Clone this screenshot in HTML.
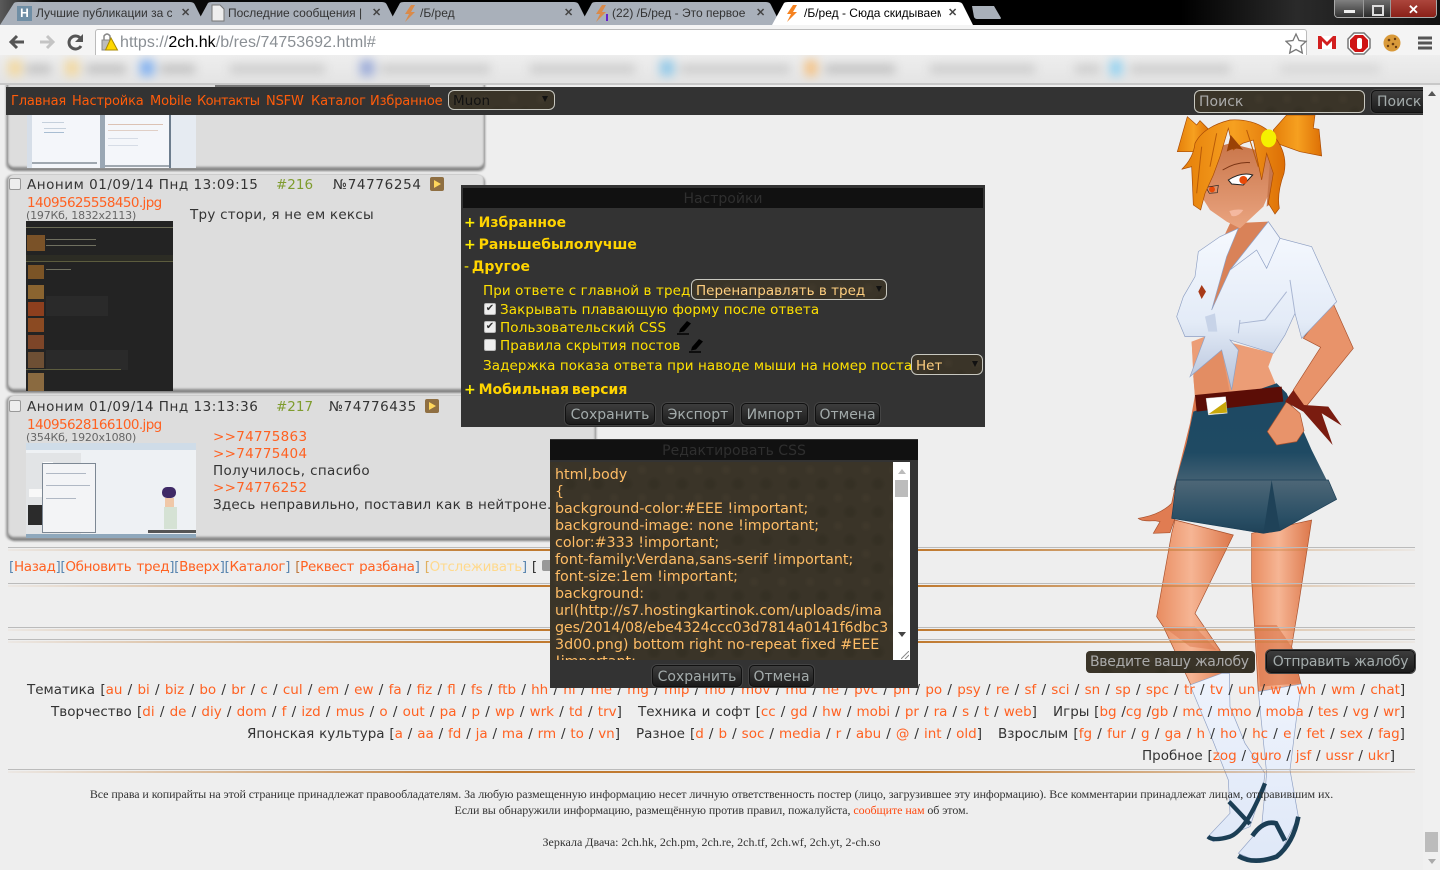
<!DOCTYPE html>
<html lang="ru"><head><meta charset="utf-8"><title>/Б/ред</title>
<style>
html,body{margin:0;padding:0;width:1440px;height:870px;overflow:hidden;background:#eee}
body{position:relative;font-family:"DejaVu Sans","Liberation Sans",sans-serif;font-size:13.5px;color:#333}
.a{position:absolute}
.t{position:absolute;white-space:nowrap;line-height:16px;height:16px;margin-top:1px}
.o{color:#ff6121}
.tab{position:absolute;font:12px/14px "Liberation Sans",sans-serif;color:#333;white-space:nowrap;overflow:hidden;top:6px}
.x{position:absolute;font:bold 11px/12px "Liberation Sans",sans-serif;color:#444;top:7px}
.post{position:absolute;background:#ddd;border-radius:6px;box-shadow:-2px 0 2px #999,1px 1px 2px #888,0 -3px 2px #888 inset}
.cb{position:absolute;width:10px;height:10px;border:1px solid #999;border-radius:2px;background:#eee}
.hr{position:absolute;left:8px;width:1407px;height:1px;background:#bbb}
.hr:after{content:"";position:absolute;left:0;right:0;top:2px;height:2px;background:linear-gradient(90deg,rgba(192,115,42,.05),#c07a30 35%,#c07a30 65%,rgba(192,115,42,.05))}
.btn{position:absolute;box-sizing:border-box;border:1px solid #111;border-radius:5px;background:linear-gradient(#3d3d3d,#1c1c1c);color:#a3abab;text-align:center;white-space:nowrap;box-shadow:0 0 0 1px #444}
.tex{background-color:#3a3428;background-image:radial-gradient(circle at 8px 8px,#3f382b 2px,transparent 6px),radial-gradient(circle at 20px 22px,#353024 3px,transparent 8px);background-size:28px 28px}
.sel{position:absolute;box-sizing:border-box;border:1px solid #c8c8c0;border-radius:6px;white-space:nowrap}
.arr{position:absolute;width:0;height:0;border-left:3px solid transparent;border-right:3px solid transparent;border-top:6px solid #111}
.y{color:#ffe100}
.h{position:absolute;white-space:nowrap;color:#ffd400;font-weight:bold;font-size:14px;line-height:16px;margin-top:1px;word-spacing:-2px}
.h b{color:#ffee00}
.box{position:absolute;white-space:nowrap;line-height:16px;text-align:justify;text-align-last:justify;margin-top:1px}
.ln{position:absolute;left:555px;white-space:nowrap;color:#ffbd66;font-size:14.3px;line-height:17px;margin-top:2px;letter-spacing:-.03px}
.f{position:absolute;left:8px;width:1407px;text-align:center;font:12px/16px "Liberation Serif",serif;color:#333;white-space:nowrap}
.m{position:absolute;top:94px;color:#ff5c0a;font-size:13px;line-height:16px;white-space:nowrap;letter-spacing:-.15px}
</style></head><body>

<!-- character background -->
<svg class="a" style="left:0;top:0" width="1440" height="870" viewBox="0 0 1440 870">
<defs>
<linearGradient id="sh" x1="0" y1="0" x2="0" y2="1"><stop offset="0" stop-color="#f7faff"/><stop offset=".6" stop-color="#e3ebf7"/><stop offset="1" stop-color="#b5c2da"/></linearGradient>
<linearGradient id="sk" x1="0" y1="0" x2="0" y2="1"><stop offset="0" stop-color="#1d4863"/><stop offset=".65" stop-color="#1f4a63"/><stop offset="1" stop-color="#4e6777"/></linearGradient>
<linearGradient id="sk2" x1="0" y1="0" x2="0" y2="1"><stop offset="0" stop-color="#4e6777"/><stop offset=".7" stop-color="#2a4f65"/><stop offset="1" stop-color="#1f4258"/></linearGradient>
<linearGradient id="leg" x1="0" y1="0" x2="1" y2="0"><stop offset="0" stop-color="#e88c60"/><stop offset=".45" stop-color="#f6b594"/><stop offset="1" stop-color="#dc774a"/></linearGradient>
<linearGradient id="hr" x1="0" y1="0" x2="1" y2="0"><stop offset="0" stop-color="#e57f0a"/><stop offset=".5" stop-color="#f6a020"/><stop offset="1" stop-color="#dd6f05"/></linearGradient>
<linearGradient id="fc" x1="0" y1="0" x2="0" y2="1"><stop offset="0" stop-color="#c9764a"/><stop offset="1" stop-color="#eaa480"/></linearGradient>
<linearGradient id="ft" x1="0" y1="0" x2="0" y2="1"><stop offset="0" stop-color="#eef3fc"/><stop offset="1" stop-color="#dfe8f8"/></linearGradient>
</defs>
<g transform="translate(1130,110) scale(.3333)">
<path d="M185,695 L195,855 L180,940 L130,1140 L165,1140 L205,900 L230,700Z" fill="#d9744a"/>
<path d="M605,570 L670,715 L520,900 L490,840 L572,712 L520,685Z" fill="#e8936a" stroke="#a8502c" stroke-width="2"/>
<path d="M300,340 L415,335 L400,390 L330,470 L300,480 L255,600 L235,600 L240,470Z" fill="#d98258"/>
<path d="M185,695 L225,680 L270,690 L430,730 L415,770 L440,830 L195,860 L190,800Z" fill="#ec9d76"/>
<path d="M225,680 L190,800 L195,860 L300,850 L275,720Z" fill="#e38d63"/>
<path d="M205,425 L270,380 L325,355 L290,440 L245,600 L300,480 L415,335 L450,385 L545,410 L620,575 L515,685 L495,610 L465,675 L430,730 L300,690 L325,720 L305,840 L275,720 L180,800 L225,680 L165,680 L140,620 L160,560 L195,500Z" fill="url(#sh)" stroke="#8fa0c4" stroke-width="2"/>
<path d="M450,385 L410,475 L380,420 L300,480 L415,335Z" fill="#eef3fb" stroke="#8fa0c4" stroke-width="2"/>
<path d="M480,510 L495,610 M330,640 L405,630 L470,545 M330,630 L325,670" fill="none" stroke="#a9b6d2" stroke-width="3"/>
<path d="M225,620 L255,610 L262,665 L235,665Z" fill="#c7d3e8"/>
<path d="M205,545 L215,525 L228,545 L215,567Z" fill="#a83a18"/>
<path d="M190,905 L440,820 L470,850 L545,1020 L605,1140 L130,1140 L170,1000Z" fill="url(#sk)"/>
<path d="M195,855 L455,830 L460,875 L200,905Z" fill="#5b0d06"/>
<path d="M228,865 L287,860 L292,910 L235,915Z" fill="#fff" stroke="#bbb"/>
<path d="M236,912 L288,875 L291,908Z" fill="#c9a80a"/>
<path d="M470,875 L510,910 L522,962 L500,995 L440,1005 L412,965Z" fill="#e8936a" stroke="#a8502c" stroke-width="2"/>
<path d="M465,875 L490,840 L522,885 L595,890 L635,947 L575,910 L608,1005 L520,905Z" fill="#7a1c10"/>
<path d="M195,170 L225,120 L300,100 L420,130 L430,220 L400,290 L330,355 L290,335 L240,300 L215,260Z" fill="url(#fc)"/>
<path d="M420,150 L460,170 L440,270 L410,290Z" fill="#c6764c"/>
<path d="M278,180 Q320,155 360,158" fill="none" stroke="#7a3414" stroke-width="3"/>
<path d="M295,210 Q335,185 368,195 L340,225 L305,222Z" fill="#fff" stroke="#222" stroke-width="3"/>
<circle cx="340" cy="210" r="12" fill="#e84a08"/><circle cx="246" cy="238" r="9" fill="#e84a08"/>
<path d="M228,232 L265,226 L262,248 L238,250Z" fill="none" stroke="#222" stroke-width="2"/>
<path d="M298,303 Q320,296 340,300 Q325,322 305,318Z" fill="#f4b8a0"/>
<path d="M142,125 L172,20 L200,45 L210,32 L240,62 L200,125Z" fill="url(#hr)" stroke="#a84a05" stroke-width="2"/>
<path d="M430,60 L470,15 L555,15 L550,55 L567,58 L575,138 L510,125 L440,100Z" fill="url(#hr)" stroke="#a84a05" stroke-width="2"/>
<path d="M155,178 Q190,145 195,100 Q220,50 300,30 Q380,25 430,75 Q475,130 462,190 Q440,250 448,295 L435,312 L415,280 L430,190 L410,130 L395,210 L370,90 L338,100 L310,120 L295,55 L270,140 L250,195 L225,250 L212,300 L190,285 L185,170Z" fill="url(#hr)" stroke="#a84a05" stroke-width="2"/>
<path d="M290,125 L302,75 L340,120 Q315,110 290,125Z" fill="#9a4206"/>
<path d="M215,110 L200,250 M260,70 L240,170 M350,60 L385,170" fill="none" stroke="#b85a08" stroke-width="3"/>
<ellipse cx="416" cy="85" rx="23" ry="27" fill="#f5f000"/>
</g>
<g transform="translate(1130,480) scale(.3333)">
<path d="M135,120 L310,165 L195,400 L270,510 L275,590 L185,620 L100,440 L80,410 L125,160Z" fill="url(#leg)" stroke="#a8502c" stroke-width="2"/>
<path d="M365,160 L545,120 L505,380 L485,500 L515,620 L385,640 L375,460 L365,300Z" fill="url(#leg)" stroke="#a8502c" stroke-width="2"/>
<path d="M100,440 L195,440 L260,510 L180,500Z" fill="#d9744a" opacity=".45"/>
<path d="M375,435 L440,435 L485,500 L510,610 L390,620Z" fill="#d9744a" opacity=".6"/>
<path d="M140,0 L125,70 Q90,105 25,115 Q35,125 75,122 L90,125 L70,160 L120,158 L135,115Z" fill="#e07c52" stroke="#a8502c" stroke-width="2"/>
<path d="M140,0 L125,115 L400,160 L450,152 L620,58 L595,0Z" fill="url(#sk2)" stroke="#1b3e55" stroke-width="2"/>
<path d="M425,0 L400,160 L450,152Z" fill="#1f4258"/>
<path d="M232,1072 L300,1000 L295,900 L240,760 L180,615 L275,580 L298,580 L300,680 L345,790 L405,880 L400,920 L360,1040 L250,1085Z" fill="url(#ft)" stroke="#8fa0c4" stroke-width="2"/>
<path d="M325,1120 L395,1040 L410,880 L385,635 L515,612 L500,710 L480,870 L505,1010 L450,1120 L390,1148Z" fill="url(#ft)" stroke="#8fa0c4" stroke-width="2"/>
<path d="M234,1070 Q250,1085 300,1070 Q350,1050 405,910" fill="none" stroke="#1b3e55" stroke-width="13"/>
<path d="M297,965 L360,1032" fill="none" stroke="#1b3e55" stroke-width="13"/>
<path d="M325,1128 Q370,1155 440,1130 Q490,1090 505,1010" fill="none" stroke="#1b3e55" stroke-width="14"/>
<path d="M367,1068 Q400,1020 438,1030 L465,1082" fill="none" stroke="#1b3e55" stroke-width="14"/>
</g>
</svg>

<!-- scrollbar -->
<div class="a" style="left:1423px;top:115px;width:17px;height:755px;background:#f0f0f0"></div>
<div class="a" style="left:1425px;top:832px;width:13px;height:20px;background:#bcbcbc;border:0"></div>
<div class="a" style="left:1428px;top:859px;width:0;height:0;border-left:4px solid transparent;border-right:4px solid transparent;border-top:5px solid #aaa"></div>

<!-- post 0 -->
<div class="post" style="left:8px;top:70px;width:476px;height:100px"></div>
<div class="a" style="left:27px;top:115px;width:169px;height:53px;background:#f4f6fa"></div>
<div class="a" style="left:27px;top:115px;width:5px;height:53px;background:#d6dee8"></div>
<div class="a" style="left:100px;top:115px;width:5px;height:53px;background:#9aa7b4"></div>
<div class="a" style="left:169px;top:115px;width:2px;height:53px;background:#6d7d8e"></div>
<div class="a" style="left:171px;top:115px;width:25px;height:53px;background:#e6ebf2"></div>
<div class="a" style="left:42px;top:122px;width:22px;height:1px;background:#c5d0dc"></div>
<div class="a" style="left:44px;top:128px;width:22px;height:1px;background:#c5d0dc"></div>
<div class="a" style="left:44px;top:132px;width:20px;height:1px;background:#a8bdd2"></div>
<div class="a" style="left:108px;top:124px;width:55px;height:1px;background:#dcc2b4"></div>
<div class="a" style="left:108px;top:130px;width:50px;height:1px;background:#e0cfc6"></div>
<div class="a" style="left:108px;top:138px;width:30px;height:1px;background:#d6dce6"></div>
<div class="a" style="left:108px;top:145px;width:30px;height:1px;background:#d6dce6"></div>
<div class="a" style="left:32px;top:162px;width:65px;height:2px;background:#a0a8b0"></div>
<div class="a" style="left:105px;top:165px;width:64px;height:2px;background:#a0a8b0"></div>

<!-- post 1 -->
<div class="post" style="left:8px;top:175px;width:476px;height:217px"></div>
<div class="cb" style="left:9px;top:178px"></div>
<div class="t" style="left:27px;top:176px;letter-spacing:.53px">Аноним 01/09/14 Пнд 13:09:15</div>
<div class="t" style="left:276px;top:176px;color:#7f9c2e">#216</div>
<div class="t" style="left:333px;top:176px;letter-spacing:.65px">№74776254</div>
<div class="a" style="left:430px;top:177px;width:14px;height:14px;background:#8f6f42;border-radius:2px"></div>
<div class="a" style="left:434px;top:180px;width:0;height:0;border-top:4px solid transparent;border-bottom:4px solid transparent;border-left:7px solid #ffd75c"></div>
<div class="t o" style="left:27px;top:194px;letter-spacing:-.6px">14095625558450.jpg</div>
<div class="t" style="left:26px;top:207px;font-size:11px;color:#666;letter-spacing:-.2px">(197Кб, 1832x2113)</div>
<div class="t" style="left:190px;top:206px;letter-spacing:.25px">Тру стори, я не ем кексы</div>
<div class="a" style="left:26px;top:221px;width:147px;height:170px;background:#232323;overflow:hidden">
<div class="a" style="left:0;top:6px;width:147px;height:1px;background:#6a6a55"></div>
<div class="a" style="left:0;top:34px;width:147px;height:7px;background:#2c2c24"></div>
<div class="a" style="left:0;top:40px;width:147px;height:1px;background:#5c5c3e"></div>
<div class="a" style="left:1px;top:14px;width:18px;height:16px;background:#7a5228"></div>
<div class="a" style="left:20px;top:18px;width:50px;height:1px;background:#707060"></div>
<div class="a" style="left:20px;top:24px;width:50px;height:1px;background:#707060"></div>
<div class="a" style="left:2px;top:44px;width:16px;height:14px;background:#7b5426"></div>
<div class="a" style="left:20px;top:48px;width:25px;height:1px;background:#707060"></div>
<div class="a" style="left:2px;top:64px;width:16px;height:14px;background:#8a6430"></div>
<div class="a" style="left:2px;top:81px;width:16px;height:14px;background:#8d3f1e"></div>
<div class="a" style="left:20px;top:75px;width:62px;height:20px;background:#2a2a2a"></div>
<div class="a" style="left:2px;top:97px;width:16px;height:14px;background:#8b4a22"></div>
<div class="a" style="left:2px;top:114px;width:16px;height:14px;background:#7d4528"></div>
<div class="a" style="left:2px;top:131px;width:16px;height:16px;background:#6d4f34"></div>
<div class="a" style="left:20px;top:129px;width:82px;height:20px;background:#2a2a2a"></div>
<div class="a" style="left:0;top:148px;width:95px;height:1px;background:#5c5c3e"></div>
<div class="a" style="left:2px;top:152px;width:16px;height:18px;background:#8a6a40"></div>
</div>

<!-- post 2 -->
<div class="post" style="left:8px;top:396px;width:587px;height:144px"></div>
<div class="cb" style="left:9px;top:400px"></div>
<div class="t" style="left:27px;top:398px;letter-spacing:.53px">Аноним 01/09/14 Пнд 13:13:36</div>
<div class="t" style="left:276px;top:398px;color:#7f9c2e">#217</div>
<div class="t" style="left:329px;top:398px;letter-spacing:.55px">№74776435</div>
<div class="a" style="left:425px;top:399px;width:14px;height:14px;background:#8f6f42;border-radius:2px"></div>
<div class="a" style="left:429px;top:402px;width:0;height:0;border-top:4px solid transparent;border-bottom:4px solid transparent;border-left:7px solid #ffd75c"></div>
<div class="t o" style="left:27px;top:416px;letter-spacing:-.6px">14095628166100.jpg</div>
<div class="t" style="left:26px;top:429px;font-size:11px;color:#666;letter-spacing:-.2px">(354Кб, 1920x1080)</div>
<div class="a" style="left:26px;top:443px;width:170px;height:95px;background:#eef1f4;overflow:hidden">
<div class="a" style="left:0;top:0;width:170px;height:7px;background:#cfdce8"></div>
<div class="a" style="left:0;top:10px;width:55px;height:85px;background:#e2e4e6"></div>
<div class="a" style="left:17px;top:19px;width:10px;height:8px;background:#fff"></div>
<div class="a" style="left:2px;top:62px;width:15px;height:20px;background:#2b2b2b"></div>
<div class="a" style="left:3px;top:46px;width:13px;height:8px;background:#f8f8f8"></div>
<div class="a" style="left:16px;top:20px;width:52px;height:68px;background:#f3f4f6;border:1px solid #7d8894"></div>
<div class="a" style="left:20px;top:30px;width:40px;height:1px;background:#b0b8c4"></div>
<div class="a" style="left:20px;top:42px;width:44px;height:1px;background:#b0b8c4"></div>
<div class="a" style="left:20px;top:55px;width:30px;height:1px;background:#b0b8c4"></div>
<div class="a" style="left:136px;top:44px;width:14px;height:11px;background:#3f2a66;border-radius:5px"></div>
<div class="a" style="left:139px;top:55px;width:9px;height:9px;background:#f0c8a8"></div>
<div class="a" style="left:138px;top:64px;width:13px;height:22px;background:#d5e2d4"></div>
<div class="a" style="left:122px;top:87px;width:48px;height:3px;background:#555"></div>
<div class="a" style="left:0;top:91px;width:170px;height:4px;background:#8fa8bc"></div>
</div>
<div class="t o" style="left:213px;top:428px;letter-spacing:.3px">&gt;&gt;74775863</div>
<div class="t o" style="left:213px;top:445px;letter-spacing:.3px">&gt;&gt;74775404</div>
<div class="t" style="left:213px;top:462px;letter-spacing:.37px">Получилось, спасибо</div>
<div class="t o" style="left:213px;top:479px;letter-spacing:.3px">&gt;&gt;74776252</div>
<div class="t" style="left:213px;top:496px;letter-spacing:.17px">Здесь неправильно, поставил как в нейтроне.</div>

<div class="hr" style="top:547px"></div>
<div class="t" style="left:9px;top:558px;color:#333;letter-spacing:-.33px;word-spacing:1.2px"><span style="color:#5a86b0">[</span><span class="o">Назад</span><span style="color:#5a86b0">][</span><span class="o">Обновить тред</span><span style="color:#5a86b0">][</span><span class="o">Вверх</span><span style="color:#5a86b0">][</span><span class="o">Каталог</span><span style="color:#5a86b0">]</span> <span style="color:#c07a40">[</span><span class="o">Реквест разбана</span><span style="color:#5a86b0">]</span> <span style="color:#e0b060">[</span><span style="color:#ffd98c">Отслеживать</span><span style="color:#5a86b0">]</span> [</div>
<div class="a" style="left:542px;top:560px;width:8px;height:11px;background:#999;border-radius:2px 0 0 2px"></div>
<div class="hr" style="top:583px"></div>
<div class="hr" style="top:627px"></div>
<div class="hr" style="top:639px"></div>

<!-- complaint -->
<div class="a tex" style="left:1086px;top:651px;width:169px;height:22px;border-radius:4px;box-sizing:border-box;color:#aaa;padding-left:4px;line-height:23px;white-space:nowrap;font-size:14px;letter-spacing:-.3px">Введите вашу жалобу</div>
<div class="btn" style="left:1266px;top:650px;width:149px;height:23px;line-height:23px;font-size:14px;letter-spacing:-.25px">Отправить жалобу</div>

<!-- board nav -->
<div class="box" style="left:27px;top:681px;width:1378px">Тематика [<span class="o">au</span> / <span class="o">bi</span> / <span class="o">biz</span> / <span class="o">bo</span> / <span class="o">br</span> / <span class="o">c</span> / <span class="o">cul</span> / <span class="o">em</span> / <span class="o">ew</span> / <span class="o">fa</span> / <span class="o">fiz</span> / <span class="o">fl</span> / <span class="o">fs</span> / <span class="o">ftb</span> / <span class="o">hh</span> / <span class="o">hi</span> / <span class="o">me</span> / <span class="o">mg</span> / <span class="o">mlp</span> / <span class="o">mo</span> / <span class="o">mov</span> / <span class="o">mu</span> / <span class="o">ne</span> / <span class="o">pvc</span> / <span class="o">ph</span> / <span class="o">po</span> / <span class="o">psy</span> / <span class="o">re</span> / <span class="o">sf</span> / <span class="o">sci</span> / <span class="o">sn</span> / <span class="o">sp</span> / <span class="o">spc</span> / <span class="o">tr</span> / <span class="o">tv</span> / <span class="o">un</span> / <span class="o">w</span> / <span class="o">wh</span> / <span class="o">wm</span> / <span class="o">chat</span>]</div>
<div class="box" style="left:51px;top:703px;width:571px">Творчество [<span class="o">di</span> / <span class="o">de</span> / <span class="o">diy</span> / <span class="o">dom</span> / <span class="o">f</span> / <span class="o">izd</span> / <span class="o">mus</span> / <span class="o">o</span> / <span class="o">out</span> / <span class="o">pa</span> / <span class="o">p</span> / <span class="o">wp</span> / <span class="o">wrk</span> / <span class="o">td</span> / <span class="o">trv</span>]</div>
<div class="box" style="left:638px;top:703px;width:399px">Техника и софт [<span class="o">cc</span> / <span class="o">gd</span> / <span class="o">hw</span> / <span class="o">mobi</span> / <span class="o">pr</span> / <span class="o">ra</span> / <span class="o">s</span> / <span class="o">t</span> / <span class="o">web</span>]</div>
<div class="box" style="left:1053px;top:703px;width:352px">Игры [<span class="o">bg</span> /<span class="o">cg</span> /<span class="o">gb</span> / <span class="o">mc</span> / <span class="o">mmo</span> / <span class="o">moba</span> / <span class="o">tes</span> / <span class="o">vg</span> / <span class="o">wr</span>]</div>
<div class="box" style="left:247px;top:725px;width:373px">Японская культура [<span class="o">a</span> / <span class="o">aa</span> / <span class="o">fd</span> / <span class="o">ja</span> / <span class="o">ma</span> / <span class="o">rm</span> / <span class="o">to</span> / <span class="o">vn</span>]</div>
<div class="box" style="left:636px;top:725px;width:346px">Разное [<span class="o">d</span> / <span class="o">b</span> / <span class="o">soc</span> / <span class="o">media</span> / <span class="o">r</span> / <span class="o">abu</span> / <span class="o">@</span> / <span class="o">int</span> / <span class="o">old</span>]</div>
<div class="box" style="left:998px;top:725px;width:407px">Взрослым [<span class="o">fg</span> / <span class="o">fur</span> / <span class="o">g</span> / <span class="o">ga</span> / <span class="o">h</span> / <span class="o">ho</span> / <span class="o">hc</span> / <span class="o">e</span> / <span class="o">fet</span> / <span class="o">sex</span> / <span class="o">fag</span>]</div>
<div class="box" style="left:1142px;top:747px;width:253px">Пробное [<span class="o">zog</span> / <span class="o">guro</span> / <span class="o">jsf</span> / <span class="o">ussr</span> / <span class="o">ukr</span>]</div>
<div class="hr" style="top:769px"></div>

<div class="f" style="top:786px;letter-spacing:-.08px">Все права и копирайты на этой странице принадлежат правообладателям. За любую размещенную информацию несет личную ответственность постер (лицо, загрузившее эту информацию). Все комментарии принадлежат лицам, отправившим их.</div>
<div class="f" style="top:802px;letter-spacing:-.08px">Если вы обнаружили информацию, размещённую против правил, пожалуйста, <span style="color:#ff4a10">сообщите нам</span> об этом.</div>
<div class="f" style="top:834px">Зеркала Двача: 2ch.hk, 2ch.pm, 2ch.re, 2ch.tf, 2ch.wf, 2ch.yt, 2-ch.so</div>

<!-- settings panel -->
<div class="a" style="left:461px;top:185px;width:524px;height:242px;background:#333"></div>
<div class="a" style="left:463px;top:188px;width:520px;height:20px;background:#111;color:#2f2f2f;text-align:center;line-height:22px;font-size:14px">Настройки</div>
<div class="h" style="left:464px;top:214px"><b>+</b> Избранное</div>
<div class="h" style="left:464px;top:236px"><b>+</b> Раньшебылолучше</div>
<div class="h" style="left:464px;top:258px"><b style="font-weight:normal">-</b> Другое</div>
<div class="t y" style="left:483px;top:282px;letter-spacing:.1px">При ответе с главной в тред</div>
<div class="sel tex" style="left:691px;top:279px;width:196px;height:21px;color:#ffcf80;padding-left:4px;line-height:23px">Перенаправлять в тред<i class="arr" style="right:4px;top:6px"></i></div>
<div class="cb" style="left:484px;top:303px;background:#eee;border-color:#bbb;color:#333;font:bold 10px/10px 'DejaVu Sans',sans-serif;text-align:center">✔</div>
<div class="t y" style="left:500px;top:301px;letter-spacing:.1px">Закрывать плавающую форму после ответа</div>
<div class="cb" style="left:484px;top:321px;background:#eee;border-color:#bbb;color:#333;font:bold 10px/10px 'DejaVu Sans',sans-serif;text-align:center">✔</div>
<div class="t y" style="left:500px;top:319px;letter-spacing:.14px">Пользовательский CSS</div>
<svg class="a" style="left:676px;top:320px" width="16" height="15" viewBox="0 0 16 15"><path d="M4 9 L11 1 L15 3.5 L8 11.5 L3 12.5Z" fill="#000"/><path d="M1 14 H13" stroke="#000" stroke-width="1.4"/></svg>
<div class="cb" style="left:484px;top:339px;background:#eee;border-color:#bbb"></div>
<div class="t y" style="left:500px;top:337px;letter-spacing:.14px">Правила скрытия постов</div>
<svg class="a" style="left:688px;top:338px" width="16" height="15" viewBox="0 0 16 15"><path d="M4 9 L11 1 L15 3.5 L8 11.5 L3 12.5Z" fill="#000"/><path d="M1 14 H13" stroke="#000" stroke-width="1.4"/></svg>
<div class="t y" style="left:483px;top:357px;letter-spacing:.09px">Задержка показа ответа при наводе мыши на номер поста</div>
<div class="sel tex" style="left:911px;top:354px;width:72px;height:21px;color:#ffcf80;padding-left:4px;line-height:23px">Нет<i class="arr" style="right:4px;top:6px"></i></div>
<div class="h" style="left:464px;top:381px"><b>+</b> Мобильная версия</div>
<div class="btn" style="left:565px;top:403px;width:90px;height:22px;line-height:22px;font-size:14px">Сохранить</div>
<div class="btn" style="left:662px;top:403px;width:72px;height:22px;line-height:22px;font-size:14px">Экспорт</div>
<div class="btn" style="left:741px;top:403px;width:67px;height:22px;line-height:22px;font-size:14px">Импорт</div>
<div class="btn" style="left:815px;top:403px;width:65px;height:22px;line-height:22px;font-size:14px">Отмена</div>

<!-- css editor -->
<div class="a" style="left:550px;top:439px;width:368px;height:249px;background:#333"></div>
<div class="a" style="left:550px;top:440px;width:368px;height:20px;background:#111;color:#2f2f2f;text-align:center;line-height:22px;font-size:14px">Редактировать CSS</div>
<div class="a tex" style="left:550px;top:462px;width:343px;height:198px"></div>
<div class="a" style="left:893px;top:462px;width:17px;height:198px;background:#fff"></div>
<div class="a" style="left:898px;top:469px;width:0;height:0;border-left:4px solid transparent;border-right:4px solid transparent;border-bottom:5px solid #bbb"></div>
<div class="a" style="left:895px;top:480px;width:13px;height:17px;background:#bcbcbc"></div>
<div class="a" style="left:898px;top:632px;width:0;height:0;border-left:4px solid transparent;border-right:4px solid transparent;border-top:5px solid #444"></div>
<svg class="a" style="left:901px;top:651px" width="8" height="8"><path d="M0 8L8 0M4 8L8 4" stroke="#888"/></svg>
<div class="a" style="left:550px;top:462px;width:343px;height:198px;overflow:hidden">
<div class="ln" style="left:5px;top:3px">html,body</div>
<div class="ln" style="left:5px;top:20px">{</div>
<div class="ln" style="left:5px;top:37px">background-color:#EEE !important;</div>
<div class="ln" style="left:5px;top:54px">background-image: none !important;</div>
<div class="ln" style="left:5px;top:71px">color:#333 !important;</div>
<div class="ln" style="left:5px;top:88px">font-family:Verdana,sans-serif !important;</div>
<div class="ln" style="left:5px;top:105px">font-size:1em !important;</div>
<div class="ln" style="left:5px;top:122px">background:</div>
<div class="ln" style="left:5px;top:139px">url(http://s7.hostingkartinok.com/uploads/ima</div>
<div class="ln" style="left:5px;top:156px;letter-spacing:-.15px">ges/2014/08/ebe4324ccc03d7814a0141f6dbc3</div>
<div class="ln" style="left:5px;top:173px">3d00.png) bottom right no-repeat fixed #EEE</div>
<div class="ln" style="left:5px;top:190px">!important;</div>
</div>
<div class="btn" style="left:652px;top:665px;width:90px;height:22px;line-height:22px;font-size:14px">Сохранить</div>
<div class="btn" style="left:749px;top:665px;width:65px;height:22px;line-height:22px;font-size:14px">Отмена</div>

<!-- nav bar -->
<div class="a" style="left:6px;top:87px;width:1417px;height:28px;background:#333"></div>
<div class="m" style="left:11px">Главная</div>
<div class="m" style="left:72px">Настройка</div>
<div class="m" style="left:150px">Mobile</div>
<div class="m" style="left:197px;letter-spacing:-.55px">Контакты</div>
<div class="m" style="left:266px">NSFW</div>
<div class="m" style="left:311px">Каталог</div>
<div class="m" style="left:370px">Избранное</div>
<div class="sel tex" style="left:448px;top:90px;width:107px;height:20px;color:#111;padding-left:4px;line-height:20px">Muon<i class="arr" style="right:6px;top:5px"></i></div>
<div class="sel tex" style="left:1194px;top:90px;width:171px;height:23px;color:#aaa;padding-left:4px;line-height:23px;font-size:14px">Поиск</div>
<div class="btn" style="left:1371px;top:90px;width:60px;height:23px;line-height:22px;font-size:14px;text-align:left;padding-left:5px">Поиск</div>
<div class="a" style="left:1423px;top:87px;width:17px;height:28px;background:#f0f0f0"></div>
<div class="a" style="left:1428px;top:91px;width:0;height:0;border-left:4px solid transparent;border-right:4px solid transparent;border-bottom:5px solid #555"></div>

<!-- bookmarks bar -->
<div class="a" style="left:0;top:55px;width:1440px;height:30px;background:linear-gradient(#eee,#e4e4e4);overflow:hidden;border-bottom:2px solid #c8c8c8;box-sizing:border-box">
<div class="a" style="left:0;top:0;width:1440px;height:28px;filter:blur(5px)">
<div class="a" style="left:8px;top:5px;width:14px;height:16px;background:#f2d8a0"></div><div class="a" style="left:26px;top:10px;width:25px;height:8px;background:#bbb"></div>
<div class="a" style="left:65px;top:5px;width:14px;height:16px;background:#f2d8a0"></div><div class="a" style="left:86px;top:10px;width:40px;height:8px;background:#bbb"></div>
<div class="a" style="left:140px;top:5px;width:14px;height:16px;background:#80b0f0"></div><div class="a" style="left:160px;top:10px;width:35px;height:8px;background:#bbb"></div>
<div class="a" style="left:230px;top:10px;width:95px;height:8px;background:#c8c8c8"></div>
<div class="a" style="left:360px;top:5px;width:14px;height:16px;background:#9aaad8"></div><div class="a" style="left:380px;top:10px;width:110px;height:8px;background:#c8c8c8"></div>
<div class="a" style="left:530px;top:10px;width:105px;height:8px;background:#c8c8c8"></div>
<div class="a" style="left:660px;top:5px;width:14px;height:16px;background:#90c8e8"></div><div class="a" style="left:680px;top:10px;width:110px;height:8px;background:#c8c8c8"></div>
<div class="a" style="left:805px;top:5px;width:12px;height:16px;background:#f4c080"></div><div class="a" style="left:825px;top:10px;width:70px;height:8px;background:#bbb"></div>
<div class="a" style="left:930px;top:10px;width:105px;height:8px;background:#c8c8c8"></div>
<div class="a" style="left:1075px;top:10px;width:25px;height:8px;background:#c8c8c8"></div>
<div class="a" style="left:1110px;top:5px;width:12px;height:16px;background:#90d0f0"></div><div class="a" style="left:1130px;top:10px;width:100px;height:8px;background:#c8c8c8"></div>
<div class="a" style="left:1280px;top:10px;width:100px;height:8px;background:#d4d4d4"></div>
</div></div>

<!-- clipped line above nav -->
<div class="a" style="left:215px;top:85px;width:215px;height:2px;background:#777"></div>

<!-- top bar -->
<div class="a" style="left:0;top:0;width:1440px;height:25px;background:linear-gradient(90deg,#5a5a5a,#111 3%,#000 30%,#000 82%,#2a2a2a 90%,#111)"></div>
<svg class="a" style="left:0;top:0" width="1010" height="26" viewBox="0 0 1010 26">
<path d="M0 25 L14 3 Q15 2 18 2 L190 2 Q194 2 195 5 L205 25Z" fill="#a9b0ba"/>
<path d="M196 25 L208 3 Q209 2 212 2 L382 2 Q386 2 387 5 L397 25Z" fill="#a9b0ba"/>
<path d="M388 25 L400 3 Q401 2 404 2 L574 2 Q578 2 579 5 L589 25Z" fill="#a9b0ba"/>
<path d="M580 25 L592 3 Q593 2 596 2 L766 2 Q770 2 771 5 L781 25Z" fill="#a9b0ba"/>
<path d="M772 25 L784 3 Q785 2 788 2 L958 2 Q962 2 963 5 L973 25Z" fill="#fff"/>
<path d="M972 6 L994 6 L1001 18 Q1001 19 999 19 L977 19 Q975 19 974 17Z" fill="#a9b0ba"/>
<path d="M411 5 L405 14 L409 14 L405 22 L415 12 L411 12 L415 5Z" fill="#d98a4a"/>
<path d="M602 5 L596 14 L600 14 L596 22 L606 12 L602 12 L606 5Z" fill="#d98a4a"/>
<rect x="606" y="14" width="2" height="7" fill="#6622cc"/>
<path d="M793 5 L787 14 L791 14 L787 22 L797 12 L793 12 L797 5Z" fill="#f58220"/>
<path d="M212 5 H220 L224 9 V21 H212Z" fill="#eee" stroke="#777"/>
</svg>
<div class="a" style="left:17px;top:6px;width:15px;height:15px;background:#6f8ea5;color:#fff;font:bold 12px/15px 'Liberation Sans',sans-serif;text-align:center">H</div>
<div class="tab" style="left:36px;width:136px">Лучшие публикации за с</div><div class="x" style="left:181px">✕</div>
<div class="tab" style="left:228px;width:135px">Последние сообщения |</div><div class="x" style="left:372px">✕</div>
<div class="tab" style="left:420px;width:120px">/Б/ред</div><div class="x" style="left:564px">✕</div>
<div class="tab" style="left:612px;width:135px">(22) /Б/ред - Это первое</div><div class="x" style="left:756px">✕</div>
<div class="tab" style="left:804px;width:137px;color:#000">/Б/ред - Сюда скидываем</div><div class="x" style="left:948px">✕</div>

<!-- window controls -->
<div class="a" style="left:1334px;top:-3px;width:103px;height:21px;border:1px solid #aaa;border-radius:4px;overflow:hidden;box-sizing:border-box;display:flex">
<div style="width:28px;background:linear-gradient(#8a8a8a,#333);position:relative"><i class="a" style="left:9px;top:12px;width:11px;height:3px;background:#eee"></i></div>
<div style="width:26px;background:linear-gradient(#777,#2a2a2a);border-left:1px solid #999;border-right:1px solid #999;position:relative"><i class="a" style="left:8px;top:7px;width:8px;height:7px;border:2px solid #ddd"></i></div>
<div style="flex:1;background:linear-gradient(#b04a40,#8a2018);color:#fff;text-align:center;font:bold 13px/24px 'Liberation Sans',sans-serif">✕</div>
</div>

<!-- toolbar -->
<div class="a" style="left:0;top:25px;width:1440px;height:30px;background:#f4f4f4"></div>
<div class="a" style="left:95px;top:29px;width:1212px;height:26px;background:#fff;border:1px solid #bbb;border-bottom:0;border-radius:3px 3px 0 0;box-sizing:border-box"></div>
<svg class="a" style="left:0;top:25px" width="100" height="30" viewBox="0 0 100 30">
<path d="M24 17 H12 M17 11 L11 17 L17 23" fill="none" stroke="#555" stroke-width="3"/>
<path d="M40 17 H52 M47 11 L53 17 L47 23" fill="none" stroke="#c4c4c4" stroke-width="3"/>
<path d="M81 14 A6.5 6.5 0 1 0 81 21" fill="none" stroke="#555" stroke-width="3"/><path d="M83 9 V17 H75Z" fill="#555"/>
</svg>
<svg class="a" style="left:100px;top:32px" width="20" height="20" viewBox="0 0 20 20">
<rect x="2" y="8" width="10" height="10" fill="#bcbcbc" stroke="#888"/><path d="M4 8 V4 Q7 0 10 4 V8" fill="none" stroke="#888" stroke-width="1.5"/>
<path d="M11 6 L17.5 18 H5.5Z" fill="#ffd800" stroke="#a88a00"/>
</svg>
<div class="a" style="left:120px;top:33px;font:16px/19px 'Liberation Sans',sans-serif;color:#8a8f94;white-space:nowrap;letter-spacing:.04px">https://<span style="color:#000">2ch.hk</span>/b/res/74753692.html#</div>
<svg class="a" style="left:1285px;top:30px" width="155" height="25" viewBox="0 0 155 25">
<path d="M11 4 L14 10.5 L21 11.3 L16 16 L17.3 23 L11 19.5 L4.7 23 L6 16 L1 11.3 L8 10.5Z" fill="#fff" stroke="#777" stroke-width="1.3"/>
<rect x="33" y="6" width="18" height="13" fill="#fff"/>
<path d="M33 6 H36 L42 12 L48 6 H51 V19 H47 V11 L42 16 L37 11 V19 H33Z" fill="#d21f1f"/>
<path d="M69 3 H79 L85 9 V18 L79 24 H69 L63 18 V9Z" fill="#fff" stroke="#777" stroke-width="1.5"/>
<path d="M70 5 H78 L83 10 V17 L78 22 H70 L65 17 V10Z" fill="#cf1414"/>
<rect x="72" y="8" width="5" height="11" rx="2" fill="#fff"/>
<circle cx="107" cy="13" r="8.5" fill="#d99a3a"/><circle cx="104" cy="10" r="1.3" fill="#6a3c10"/><circle cx="110" cy="9" r="1.2" fill="#6a3c10"/><circle cx="108" cy="14" r="1.3" fill="#6a3c10"/><circle cx="103" cy="16" r="1.2" fill="#6a3c10"/><circle cx="111" cy="17" r="1.2" fill="#6a3c10"/>
<path d="M133 8 H147 M133 13 H147 M133 18 H147" stroke="#555" stroke-width="3"/>
</svg>
</body></html>
